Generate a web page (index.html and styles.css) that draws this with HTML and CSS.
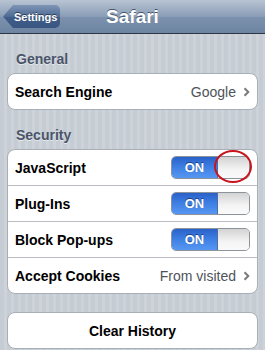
FILE: index.html
```html
<!DOCTYPE html>
<html lang="en">
<head>
    <meta charset="UTF-8">
    <meta name="viewport" content="width=device-width, initial-scale=1.0">
    <title>Safari</title>
    <link rel="stylesheet" href="styles.css">
</head>
<body>
    <div class="navbar">
        <a class="back-btn" href="#">Settings</a>
        <h1 class="nav-title">Safari</h1>
    </div>

    <div class="group-title">General</div>
    <div class="group">
        <div class="row">
            <span class="row-label">Search Engine</span>
            <span class="row-value">Google</span>
            <svg class="chevron" width="7" height="10" viewBox="0 0 7 10"><path d="M1.5 1.2 L5.3 5 L1.5 8.8" fill="none" stroke="#7a7a7a" stroke-width="2"/></svg>
        </div>
    </div>

    <div class="group-title">Security</div>
    <div class="group">
        <div class="row">
            <span class="row-label">JavaScript</span>
            <div class="switch">
                <span class="switch-on">ON</span>
                <span class="switch-knob"></span>
                <span class="mark"></span>
            </div>
        </div>
        <div class="row">
            <span class="row-label">Plug-Ins</span>
            <div class="switch">
                <span class="switch-on">ON</span>
                <span class="switch-knob"></span>
            </div>
        </div>
        <div class="row">
            <span class="row-label">Block Pop-ups</span>
            <div class="switch">
                <span class="switch-on">ON</span>
                <span class="switch-knob"></span>
            </div>
        </div>
        <div class="row">
            <span class="row-label">Accept Cookies</span>
            <span class="row-value">From visited</span>
            <svg class="chevron" width="7" height="10" viewBox="0 0 7 10"><path d="M1.5 1.2 L5.3 5 L1.5 8.8" fill="none" stroke="#7a7a7a" stroke-width="2"/></svg>
        </div>
    </div>

    <div class="group group-button">
        <div class="row row-center">Clear History</div>
    </div>
</body>
</html>
```

FILE: styles.css
```css
body {
    margin: 0;
    font-family: "Liberation Sans", Arial, sans-serif;
    background: repeating-linear-gradient(90deg, #c5ccd4 0 4px, #cdd3d9 4px 7px);
    overflow: hidden;
}

.navbar {
    height: 33px;
    border-bottom: 1px solid #2d3642;
    background: linear-gradient(#b8c4d3, #8a9db6 50%, #7c91ad 51%, #6d84a2);
    display: flex;
    align-items: center;
    justify-content: center;
    position: relative;
}
.nav-title {
    margin: 0;
    font-size: 19px;
    font-weight: bold;
    color: #fff;
    text-shadow: 0 -1px 0 #44546a;
}
.back-btn {
    position: absolute;
    left: 3px;
    top: 5px;
    height: 23px;
    width: 57px;
    box-sizing: border-box;
    padding-left: 11px;
    display: flex;
    align-items: center;
    font-size: 11px;
    font-weight: bold;
    color: #fff;
    text-decoration: none;
    text-shadow: 0 -1px 0 #2a3a55;
    background: linear-gradient(#7f95b5, #4e6b94 50%, #3f5d89 51%, #3a5782);
    clip-path: polygon(0 50%, 10px 0, 100% 0, 100% 100%, 10px 100%);
    border-radius: 0 5px 5px 0;
}

.group-title {
    padding: 17px 0 6px 16px;
    height: 16px;
    font-size: 14px;
    font-weight: bold;
    color: #4a5469;
    text-shadow: 0 1px 0 #e6e9ee;
}

.group {
    margin: 0 7px;
    background: #fff;
    border: 1px solid #a9afb7;
    border-radius: 8px;
}
.group-button { margin-top: 18px; }

.row {
    height: 35px;
    display: flex;
    align-items: center;
    padding: 0 7px 0 7px;
    border-top: 1px solid #b9bcc0;
    position: relative;
}
.row:first-child { border-top: none; }
.row-label {
    flex: 1;
    font-size: 14px;
    font-weight: bold;
    color: #000;
}
.row-value {
    font-size: 14px;
    color: #4e535a;
    margin-right: 7px;
}
.row-center {
    justify-content: center;
    font-size: 14px;
    font-weight: bold;
}

.switch {
    width: 77px;
    height: 21px;
    display: flex;
    border: 1px solid #8d939a;
    border-radius: 5px;
    position: relative;
}
.switch-on {
    width: 45px;
    border-radius: 4px 0 0 4px;
    background: linear-gradient(#2a61c9, #3f80e4 50%, #5796f2);
    color: #fff;
    font-size: 13px;
    font-weight: bold;
    display: flex;
    align-items: center;
    justify-content: center;
    text-shadow: 0 -1px 0 #1c3f80;
    border-right: 1px solid #4a6fa5;
}
.switch-knob {
    flex: 1;
    border-radius: 0 4px 4px 0;
    background: linear-gradient(#d3d3d3, #f4f4f4 60%, #fafafa);
}
.mark {
    position: absolute;
    left: 42px;
    top: -7px;
    width: 34px;
    height: 29px;
    border: 2.5px solid #c8141e;
    border-radius: 50%;
}
```
